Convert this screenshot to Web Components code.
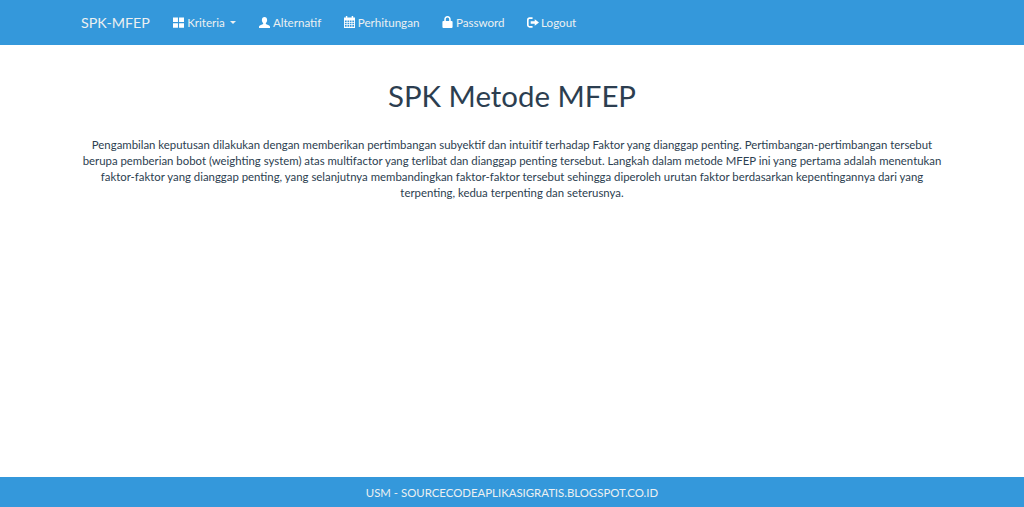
<!DOCTYPE html>
<html lang="id">
<head>
<meta charset="utf-8">
<title>SPK Metode MFEP</title>
<style>
  html, body { margin: 0; height: 100%; }
  body { font-family: "Lato", sans-serif; font-size: 11.4px; color: #2c3e50; background: #fff; }
  spk-page { height: 507px; }
</style>
</head>
<body>
<spk-page>
  <spk-navbar slot="nav" brand="SPK-MFEP">
    <nav-link icon="th" caret>Kriteria</nav-link>
    <nav-link icon="user">Alternatif</nav-link>
    <nav-link icon="calendar">Perhitungan</nav-link>
    <nav-link icon="lock">Password</nav-link>
    <nav-link icon="logout" gap="2">Logout</nav-link>
  </spk-navbar>
  <spk-intro heading="SPK Metode MFEP">Pengambilan keputusan dilakukan dengan memberikan pertimbangan subyektif dan intuitif terhadap Faktor yang dianggap penting. Pertimbangan-pertimbangan tersebut berupa pemberian bobot (weighting system) atas multifactor yang terlibat dan dianggap penting tersebut. Langkah dalam metode MFEP ini yang pertama adalah menentukan faktor-faktor yang dianggap penting, yang selanjutnya membandingkan faktor-faktor tersebut sehingga diperoleh urutan faktor berdasarkan kepentingannya dari yang terpenting, kedua terpenting dan seterusnya.</spk-intro>
  <spk-footer slot="footer">USM - SOURCECODEAPLIKASIGRATIS.BLOGSPOT.CO.ID</spk-footer>
</spk-page>

<script>
const ICONS = {
  th: '<svg viewBox="0 0 12 12" width="11" height="11"><path fill="currentColor" d="M0 .5h5.400v5H0zM6.600.5H12v5H6.600zM0 6.700h5.400v5H0zM6.600 6.700H12v5H6.600z"/></svg>',
  user: '<svg viewBox="0 0 13 13" width="11" height="11"><path fill="currentColor" d="M6.500 0C8.400 0 9.600 1.500 9.600 3.500c0 1.500-.6 2.900-1.500 3.700v1.200l3.300 1.300c.9.400 1.600 1 1.600 2V13H0v-1.300c0-1 .7-1.600 1.600-2l3.300-1.300V7.200C4 6.400 3.400 5 3.400 3.500 3.400 1.500 4.600 0 6.500 0z"/></svg>',
  calendar: '<svg viewBox="0 0 12 13" width="11" height="12"><path fill="currentColor" fill-rule="evenodd" d="M2 0h1.600v1.600h4.800V0H10v1.600h2V13H0V1.600h2zM1 4.800v1.700h1.900V4.800zm2.800 0v1.700h1.800V4.800zm2.600 0v1.700h1.800V4.800zm2.700 0v1.700H11V4.800zM1 7.300V9h1.900V7.300zm2.800 0V9h1.800V7.300zm2.600 0V9h1.800V7.300zm2.700 0V9H11V7.300zM1 9.800v1.900h1.900V9.800zm2.800 0v1.900h1.800V9.800zm2.600 0v1.900h1.800V9.800zm2.700 0v1.900H11V9.800z"/></svg>',
  lock: '<svg viewBox="0 0 11 13" width="11" height="12"><path fill="currentColor" fill-rule="evenodd" d="M5.500 0C7.600 0 9 1.500 9 3.600V5.300h1c.6 0 1 .4 1 1V12c0 .6-.4 1-1 1H1c-.6 0-1-.4-1-1V6.300c0-.6.4-1 1-1h1V3.600C2 1.500 3.400 0 5.500 0zm0 1.700c-1.100 0-1.800.8-1.800 1.900v1.700h3.600V3.600c0-1.100-.7-1.900-1.800-1.900z"/></svg>',
  logout: '<svg viewBox="0 0 14 12" width="12" height="11"><path fill="currentColor" d="M3 0h3.500v1.800H3.300c-.8 0-1.400.6-1.400 1.400v5.600c0 .8.6 1.400 1.400 1.400h3.200V12H3c-1.700 0-3-1.300-3-3V3c0-1.700 1.300-3 3-3z"/><path fill="currentColor" d="M9 2.200 14 6 9 9.800V7.500H4.300v-3H9z"/></svg>'
};

class SpkPage extends HTMLElement {
  constructor() {
    super();
    const shadow = this.attachShadow({ mode: 'open' });
    shadow.innerHTML = `
      <style>
        :host { display: flex; flex-direction: column; }
        main { flex: 1; }
      </style>
      <slot name="nav"></slot>
      <main><slot></slot></main>
      <slot name="footer"></slot>
    `;
  }
}

class SpkNavbar extends HTMLElement {
  constructor() {
    super();
    const shadow = this.attachShadow({ mode: 'open' });
    shadow.innerHTML = `
      <style>
        :host { display: block; background: #3498db; height: 45px; color: #fff; }
        nav { display: flex; align-items: center; height: 44px; padding-left: 81px; }
        .brand { padding-right: 12px; font-size: 14.3px; color: #ecf0f1; }
        .links { display: flex; align-items: center; }
      </style>
      <nav>
        <span class="brand" id="brand"></span>
        <div class="links"><slot></slot></div>
      </nav>
    `;
    shadow.getElementById('brand').textContent = this.getAttribute('brand') || '';
  }
}

class NavLink extends HTMLElement {
  constructor() {
    super();
    const shadow = this.attachShadow({ mode: 'open' });
    const icon = ICONS[this.getAttribute('icon')] || '';
    const caret = this.hasAttribute('caret') ? '<i class="caret"></i>' : '';
    const gap = this.getAttribute('gap') || 3;
    shadow.innerHTML = `
      <style>
        :host { display: block; padding: 0 11.25px; color: #ecf0f1; font-size: 11.6px; white-space: nowrap; }
        a { display: flex; align-items: center; gap: ${gap}px; color: inherit; height: 43px; }
        svg { display: block; color: #fff; }
        .caret { width: 0; height: 0; margin: 0 2.5px 0 0; transform: translateX(2px); border-top: 3px solid; border-left: 3.5px solid transparent; border-right: 3.5px solid transparent; }
      </style>
      <a>${icon}<span><slot></slot></span>${caret}</a>
    `;
  }
}

class SpkIntro extends HTMLElement {
  constructor() {
    super();
    const shadow = this.attachShadow({ mode: 'open' });
    shadow.innerHTML = `
      <style>
        :host { display: block; padding: 0 80px; text-align: center; color: #2c3e50; }
        h1 { margin: 31px 0 20.5px; font-size: 29.4px; font-weight: 400; line-height: 40px; }
        p { margin: 0; font-size: 11.38px; line-height: 16.25px; }
      </style>
      <h1 id="heading"></h1>
      <p><slot></slot></p>
    `;
    shadow.getElementById('heading').textContent = this.getAttribute('heading') || '';
  }
}

class SpkFooter extends HTMLElement {
  constructor() {
    super();
    const shadow = this.attachShadow({ mode: 'open' });
    shadow.innerHTML = `
      <style>
        :host { display: block; background: #3498db; color: #ecf0f1; height: 30px; line-height: 32px; text-align: center; font-size: 11.4px; }
      </style>
      <slot></slot>
    `;
  }
}

customElements.define('spk-page', SpkPage);
customElements.define('spk-navbar', SpkNavbar);
customElements.define('nav-link', NavLink);
customElements.define('spk-intro', SpkIntro);
customElements.define('spk-footer', SpkFooter);
</script>
</body>
</html>
